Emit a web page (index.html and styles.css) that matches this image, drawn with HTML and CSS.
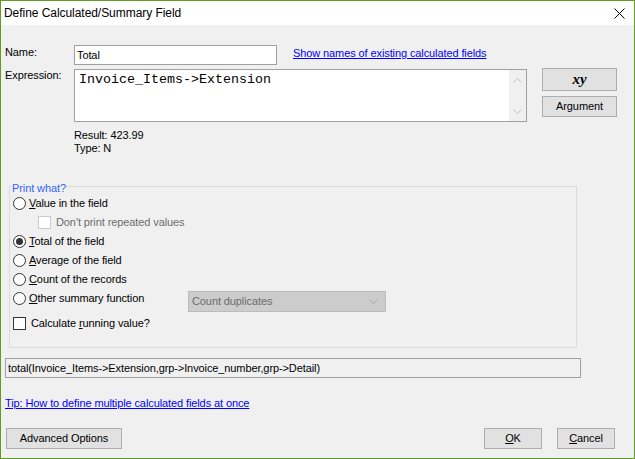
FILE: index.html
```html
<!DOCTYPE html>
<html>
<head>
<meta charset="utf-8">
<link rel="stylesheet" href="styles.css">
</head>
<body>
<div class="window">
  <div class="titlebar">
    <span class="title">Define Calculated/Summary Field</span>
    <svg class="close" width="11" height="11" viewBox="0 0 11 11"><path d="M0.5 0.5L10.5 10.5M10.5 0.5L0.5 10.5" stroke="#000" stroke-width="1" fill="none"/></svg>
  </div>
  <div class="content">
    <div class="row-name">
      <span class="lbl">Name:</span>
      <div class="edit name-edit">Total</div>
      <a class="link show-link" href="#">Show names of existing calculated fields</a>
    </div>
    <div class="row-expr">
      <span class="lbl">Expression:</span>
      <div class="memo">
        <div class="memo-text">Invoice_Items-&gt;Extension</div>
        <div class="vscroll">
          <svg width="9" height="5" viewBox="0 0 9 5"><path d="M0.5 4.5L4.5 0.5L8.5 4.5" stroke="#c2c2c2" fill="none"/></svg>
          <svg width="9" height="5" viewBox="0 0 9 5"><path d="M0.5 0.5L4.5 4.5L8.5 0.5" stroke="#c2c2c2" fill="none"/></svg>
        </div>
      </div>
      <div class="side-btns">
        <button class="btn btn-xy">xy</button>
        <button class="btn btn-arg">Argument</button>
      </div>
    </div>
    <div class="result">
      <div>Result: 423.99</div>
      <div>Type: N</div>
    </div>
    <fieldset class="group">
      <legend>Print what?</legend>
      <div class="opt first"><span class="radio"></span><span class="opt-label"><u>V</u>alue in the field</span></div>
      <div class="opt sub"><span class="check dis"></span><span class="opt-label dis-text">Don't print repeated values</span></div>
      <div class="opt"><span class="radio on"><span class="dot"></span></span><span class="opt-label"><u>T</u>otal of the field</span></div>
      <div class="opt"><span class="radio"></span><span class="opt-label"><u>A</u>verage of the field</span></div>
      <div class="opt"><span class="radio"></span><span class="opt-label"><u>C</u>ount of the records</span></div>
      <div class="opt"><span class="radio"></span><span class="opt-label wide"><u>O</u>ther summary function</span>
        <div class="combo"><span>Count duplicates</span>
          <svg width="9" height="5" viewBox="0 0 9 5"><path d="M0.5 0.5L4.5 4.5L8.5 0.5" stroke="#a8a8a8" fill="none"/></svg>
        </div>
      </div>
      <div class="opt calc"><span class="check"></span><span class="opt-label calc-label">Calculate <u>r</u>unning value?</span></div>
    </fieldset>
    <div class="formula">total(Invoice_Items-&gt;Extension,grp-&gt;Invoice_number,grp-&gt;Detail)</div>
    <a class="link tip" href="#">Tip: How to define multiple calculated fields at once</a>
    <div class="footer">
      <button class="btn btn-adv">Advanced Options</button>
      <button class="btn btn-ok"><u>O</u>K</button>
      <button class="btn btn-cancel"><u>C</u>ancel</button>
    </div>
  </div>
</div>
</body>
</html>
```
FILE: styles.css
```css
html, body {
  margin: 0;
  padding: 0;
  background: #f0f0f0;
}
.window {
  width: 635px;
  height: 459px;
  box-sizing: border-box;
  border: 1px solid #5f9b25;
  background: #f0f0f0;
  display: flex;
  flex-direction: column;
  font-family: "Liberation Sans", Arial, sans-serif;
  font-size: 11px;
  letter-spacing: -0.1px;
  color: #000;
}
.titlebar {
  height: 24px;
  flex: none;
  background: #fff;
  display: flex;
  align-items: center;
  padding-left: 3px;
}
.title {
  font-size: 12px;
  letter-spacing: -0.05px;
  line-height: 15px;
  margin-top: 1px;
}
.close {
  margin-left: auto;
  margin-right: 9px;
  margin-top: 1px;
}
.content {
  flex: 1;
  display: flex;
  flex-direction: column;
  padding: 0 4px;
}
.lbl {
  width: 69px;
  flex: none;
  line-height: 15px;
}
.row-name {
  display: flex;
  align-items: flex-start;
  margin-top: 20px;
}
.edit {
  box-sizing: border-box;
  background: #fff;
  border: 1px solid #a0a0a0;
}
.name-edit {
  width: 203px;
  height: 20px;
  line-height: 18px;
  padding-left: 2px;
}
.link {
  color: #0000ff;
  text-decoration: underline;
  line-height: 15px;
}
.show-link {
  margin-left: 16px;
  margin-top: 1px;
}
.row-expr {
  display: flex;
  align-items: flex-start;
  margin-top: 3px;
}
.memo {
  margin-top: 1px;
  width: 453px;
  height: 53px;
  box-sizing: border-box;
  border: 1px solid #a0a0a0;
  background: #fff;
  display: flex;
}
.memo-text {
  flex: 1;
  font-family: "Liberation Mono", "Courier New", monospace;
  font-size: 13.33px;
  letter-spacing: 0;
  line-height: 15px;
  padding: 2px 0 0 4px;
}
.vscroll {
  width: 17px;
  background: #f0f0f0;
  display: flex;
  flex-direction: column;
  justify-content: space-between;
  align-items: center;
  padding: 8px 0 7px;
}
.side-btns {
  margin-left: 15px;
  display: flex;
  flex-direction: column;
  gap: 5px;
}
.btn {
  box-sizing: border-box;
  background: #e1e1e1;
  border: 1px solid #adadad;
  padding: 0;
  margin: 0;
  font-family: "Liberation Sans", Arial, sans-serif;
  font-size: 11px;
  letter-spacing: -0.1px;
  color: #000;
  line-height: 15px;
}
.btn-xy {
  width: 75px;
  height: 23px;
  font-family: "Liberation Serif", "Times New Roman", serif;
  font-style: italic;
  font-weight: bold;
  font-size: 15px;
  letter-spacing: 0;
}
.btn-arg {
  width: 75px;
  height: 21px;
}
.result {
  margin-top: 7px;
  margin-left: 69px;
  line-height: 13px;
}
.group {
  margin: 22px 0 0 4px;
  width: 568px;
  box-sizing: border-box;
  border: 1px solid #dcdcdc;
  padding: 0 0 14px 2px;
  min-width: 0;
}
.group legend {
  padding: 4px 0 0 0;
  line-height: 14px;
  color: #3366ff;
}
.opt {
  display: flex;
  align-items: center;
  height: 19px;
  margin-left: 1px;
}
.opt.first {
  margin-top: -1px;
}
.radio {
  width: 13px;
  height: 13px;
  box-sizing: border-box;
  border: 1px solid #333;
  border-radius: 50%;
  background: #fff;
  flex: none;
  display: flex;
  align-items: center;
  justify-content: center;
}
.dot {
  width: 7px;
  height: 7px;
  border-radius: 50%;
  background: #333;
}
.opt-label {
  margin-left: 3px;
  line-height: 15px;
}
.opt-label.wide {
  width: 159px;
  flex: none;
}
.check {
  width: 13px;
  height: 13px;
  box-sizing: border-box;
  border: 1px solid #333;
  background: #fff;
  flex: none;
}
.check.dis {
  border-color: #cccccc;
}
.sub {
  padding-left: 25px;
}
.sub .opt-label {
  margin-left: 5px;
}
.dis-text {
  color: #6d6d6d;
}
.calc {
  margin-top: 6px;
}
.calc-label {
  margin-left: 5px;
}
.combo {
  align-self: flex-start;
  margin-top: 2px;
  width: 198px;
  height: 21px;
  box-sizing: border-box;
  border: 1px solid #bcbcbc;
  background: #cccccc;
  color: #6d6d6d;
  display: flex;
  align-items: center;
  justify-content: space-between;
  padding: 0 7px 0 3px;
  line-height: 15px;
  flex: none;
}
.formula {
  margin-top: 10px;
  width: 576px;
  height: 20px;
  box-sizing: border-box;
  border: 1px solid #a0a0a0;
  line-height: 18px;
  padding-left: 2px;
}
.tip {
  margin-top: 18px;
  align-self: flex-start;
}
.footer {
  margin-top: 17px;
  display: flex;
  align-items: center;
}
.btn-adv {
  width: 116px;
  height: 21px;
  margin-left: 1px;
}
.btn-ok {
  width: 58px;
  height: 21px;
  margin-left: auto;
}
.btn-cancel {
  width: 58px;
  height: 21px;
  margin-left: 15px;
  margin-right: 15px;
}
```
